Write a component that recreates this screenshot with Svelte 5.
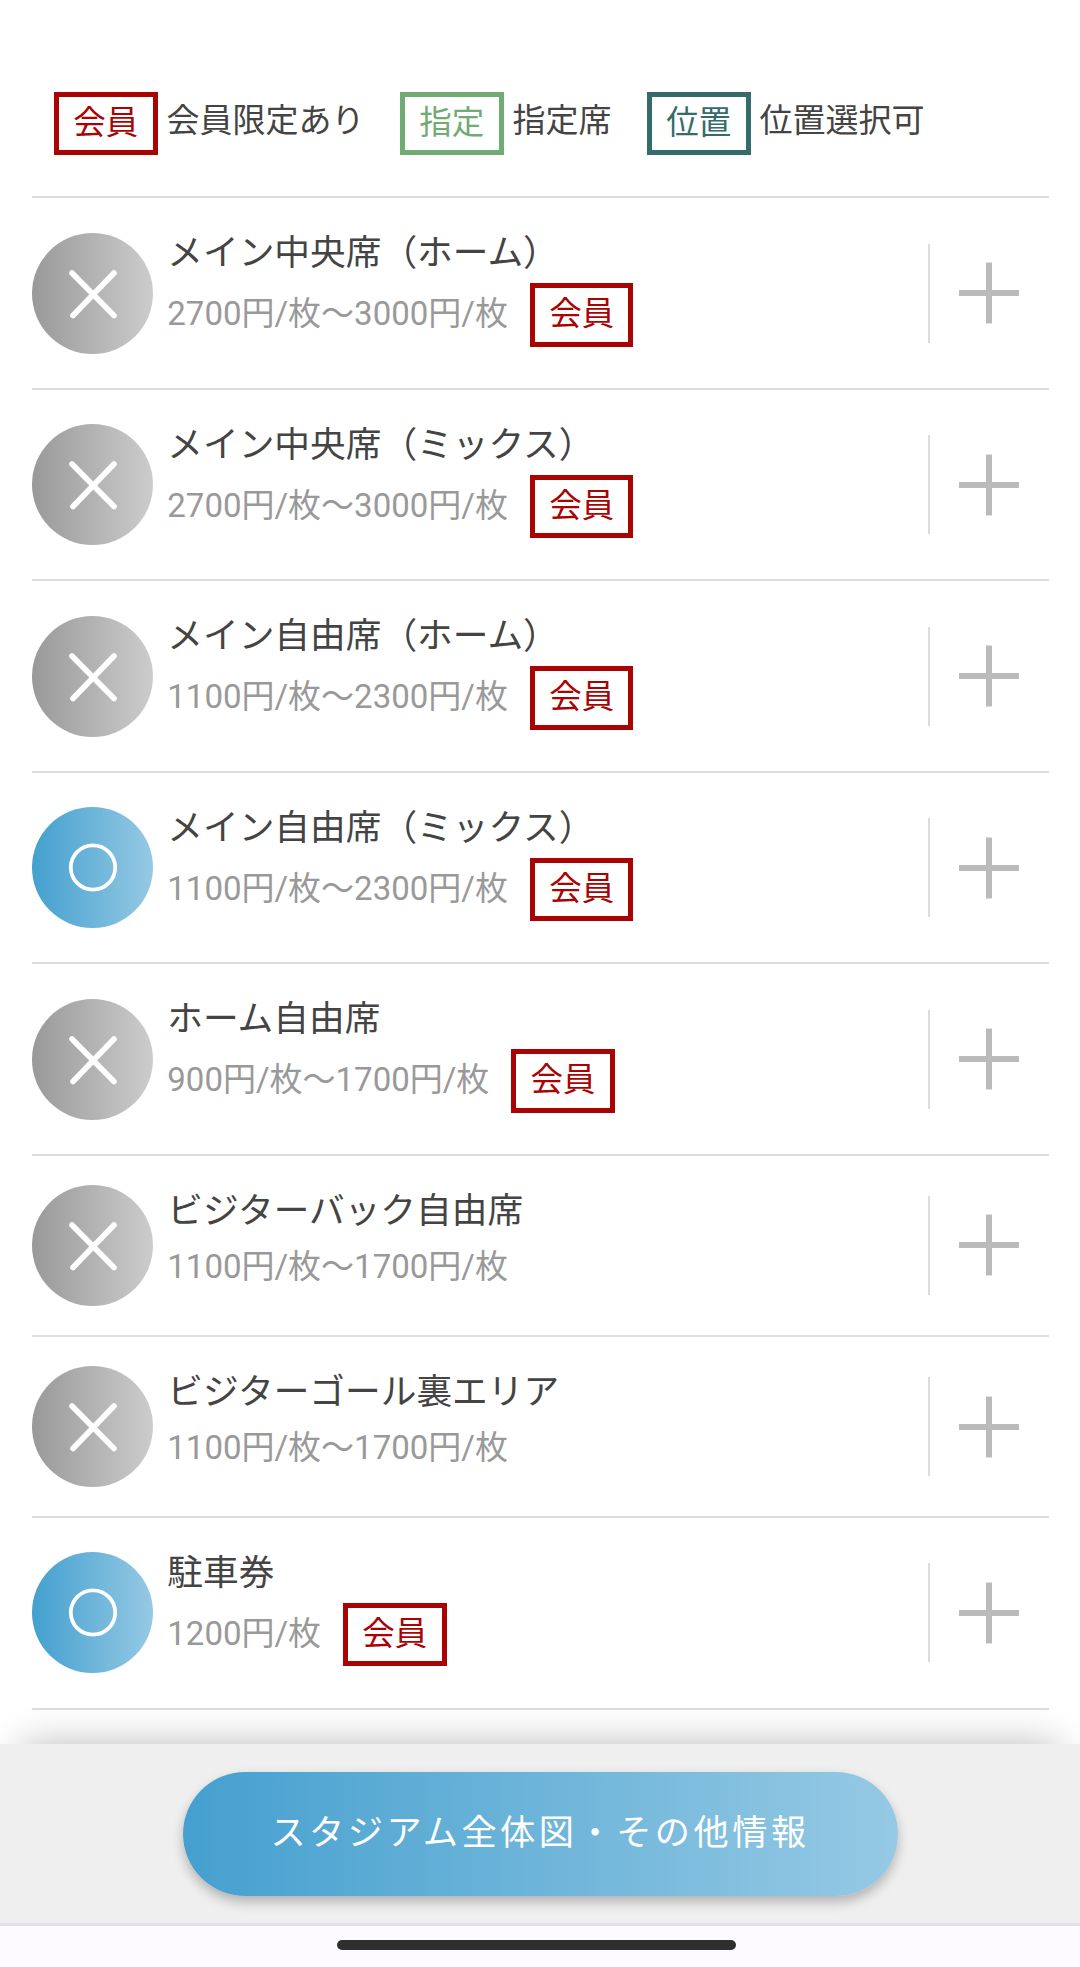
<script lang="ts">
	type Seat = {
		name: string;
		price: string;
		open: boolean;
		member: boolean;
	};

	const legend = [
		{ tag: '会員', label: '会員限定あり', kind: 'member' },
		{ tag: '指定', label: '指定席', kind: 'reserved' },
		{ tag: '位置', label: '位置選択可', kind: 'position' },
	];

	const seats: Seat[] = [
		{ name: 'メイン中央席（ホーム）', price: '2700円/枚〜3000円/枚', open: false, member: true },
		{ name: 'メイン中央席（ミックス）', price: '2700円/枚〜3000円/枚', open: false, member: true },
		{ name: 'メイン自由席（ホーム）', price: '1100円/枚〜2300円/枚', open: false, member: true },
		{ name: 'メイン自由席（ミックス）', price: '1100円/枚〜2300円/枚', open: true, member: true },
		{ name: 'ホーム自由席', price: '900円/枚〜1700円/枚', open: false, member: true },
		{ name: 'ビジターバック自由席', price: '1100円/枚〜1700円/枚', open: false, member: false },
		{ name: 'ビジターゴール裏エリア', price: '1100円/枚〜1700円/枚', open: false, member: false },
		{ name: '駐車券', price: '1200円/枚', open: true, member: true },
	];
</script>

<div class="page">
	<main>
		<div class="legend">
			{#each legend as item}
				<div class="legend-item">
					<span class="tag {item.kind}">{item.tag}</span>
					<span class="legend-label">{item.label}</span>
				</div>
			{/each}
		</div>

		<ul class="seats">
			{#each seats as seat}
				<li class="seat" class:tagged={seat.member}>
					<div class="status" class:open={seat.open}>
						<svg width="121" height="121" viewBox="0 0 121 121" fill="none" stroke="#fff">
							{#if seat.open}
								<circle cx="61" cy="60.5" r="22.2" stroke-width="3.8" />
							{:else}
								<path d="M40 40L82 82.5M82 40L41 82.5" stroke-width="5.6" stroke-linecap="round" />
							{/if}
						</svg>
					</div>
					<div class="info">
						<div class="name">{seat.name}</div>
						<div class="detail">
							<span class="price">{seat.price}</span>
							{#if seat.member}
								<span class="tag member">会員</span>
							{/if}
						</div>
					</div>
					<button class="expand" aria-label="開く">
						<svg width="60" height="62" viewBox="0 0 60 62" fill="#bbb">
							<path d="M27 0.5h6v61h-6zM0 28h60v6H0z" />
						</svg>
					</button>
				</li>
			{/each}
		</ul>
	</main>

	<footer>
		<button class="map-button">スタジアム全体図・その他情報</button>
	</footer>
	<div class="nav-bar">
		<div class="handle"></div>
	</div>
</div>

<style>
	:global(body) {
		background: #fff;
	}

	.page {
		display: flex;
		flex-direction: column;
		width: 1080px;
		height: 1967px;
		overflow: hidden;
		color: #444;
		font-family: Roboto, 'Noto Sans CJK JP', sans-serif;
		font-size: 33px;
	}

	main {
		height: 1744px;
		box-sizing: border-box;
		padding: 92px 31px 0 32px;
	}

	.legend {
		display: flex;
		height: 104.4px;
		padding-left: 22px;
		gap: 35.5px;
	}

	.legend-item {
		display: flex;
		align-items: flex-start;
		gap: 9px;
	}

	.legend-label {
		line-height: 58px;
		white-space: nowrap;
	}

	.tag {
		box-sizing: border-box;
		width: 103.5px;
		height: 63.4px;
		border: 5px solid;
		font-size: 32.5px;
		line-height: 53px;
		text-align: center;
		white-space: nowrap;
	}

	.member {
		color: #a90303;
	}

	.reserved {
		color: #70ab73;
	}

	.position {
		color: #366b6b;
	}

	.seats {
		margin: 0;
		padding: 0;
		list-style: none;
		border-top: 2px solid #ddd;
	}

	.seat {
		display: flex;
		align-items: center;
		box-sizing: border-box;
		height: 181.1px;
		border-bottom: 2px solid #ddd;
	}

	.seat.tagged {
		height: 191.5px;
	}

	.status {
		flex: none;
		width: 121px;
		height: 121px;
		border-radius: 50%;
		background: linear-gradient(to right, #999, #ccc);
	}

	.status.open {
		background: linear-gradient(to right, #43a0cf, #96c9e4);
	}

	svg {
		display: block;
	}

	.info {
		flex: 1;
		align-self: flex-start;
		padding: 31px 0 0 14.3px;
	}

	.name {
		font-size: 35.7px;
		line-height: 49px;
		white-space: nowrap;
	}

	.detail {
		display: flex;
		align-items: flex-start;
		gap: 22px;
	}

	.tagged .detail {
		padding-top: 5px;
	}

	.price {
		color: #999;
		line-height: 62px;
		white-space: nowrap;
	}

	.expand {
		flex: none;
		display: flex;
		align-items: center;
		width: 121px;
		height: 99px;
		padding: 0 0 0 29px;
		border: none;
		border-left: 2px solid #ddd;
		background: none;
	}

	footer {
		display: flex;
		justify-content: center;
		box-sizing: border-box;
		height: 179px;
		padding-top: 28px;
		background: #efefef;
		box-shadow: 0 -22px 36px -22px rgba(0, 0, 0, 0.27);
	}

	.map-button {
		width: 715px;
		height: 124px;
		padding: 0 0 9px;
		border: none;
		border-radius: 62px;
		background: linear-gradient(to right, #45a0cf, #95c9e4);
		box-shadow: 0 6px 12px rgba(0, 0, 0, 0.25);
		color: #fff;
		font-family: inherit;
		font-size: 35.2px;
		letter-spacing: 3.5px;
		white-space: nowrap;
	}

	.nav-bar {
		display: flex;
		justify-content: center;
		box-sizing: border-box;
		height: 44px;
		padding: 14px 7px 0 0;
		border-top: 3px solid #e2e1e8;
		background: #fdfbff;
		position: relative;
	}

	.handle {
		width: 399px;
		height: 10px;
		border-radius: 5px;
		background: #2f2f2f;
	}
</style>
